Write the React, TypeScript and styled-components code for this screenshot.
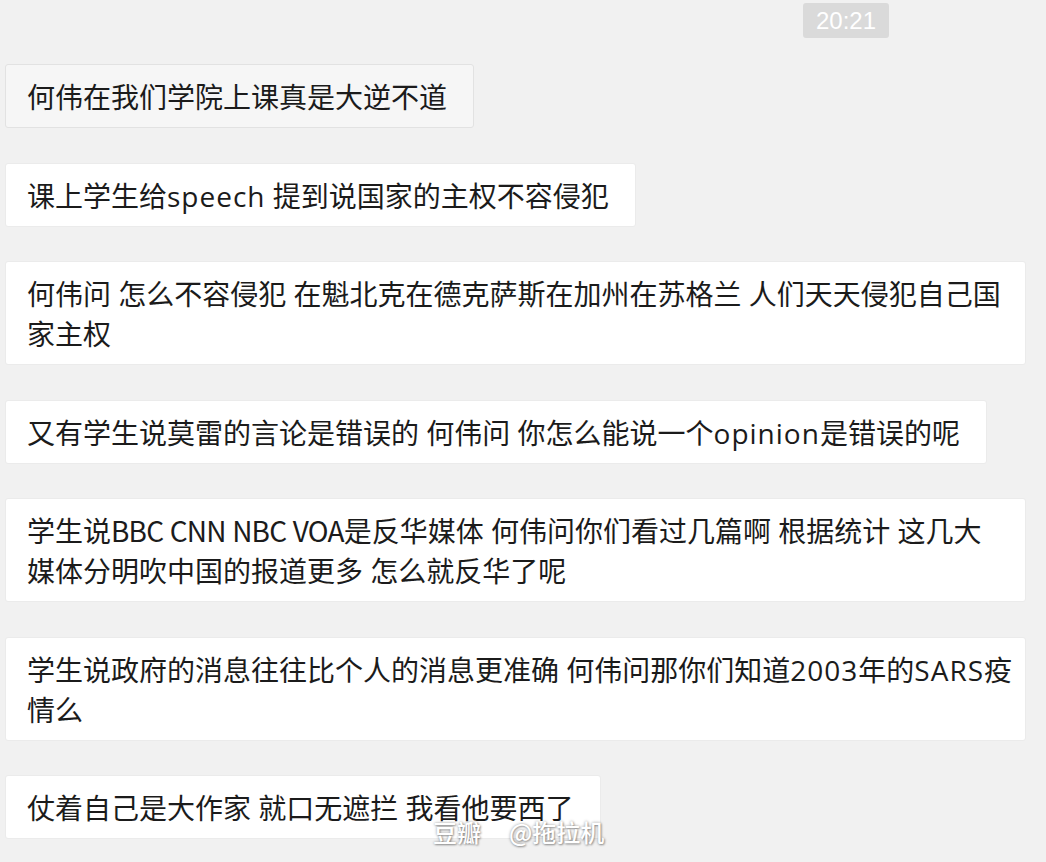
import React from "react";
import styled, { createGlobalStyle } from "styled-components";

const Global = createGlobalStyle`
  html, body { margin: 0; padding: 0; background: #f1f1f1; }
  body { font-family: "Noto Sans CJK SC", "Noto Sans", sans-serif; }
`;

const Page = styled.div`
  position: relative;
  width: 1046px;
  height: 862px;
  overflow: hidden;
  background: #f1f1f1;
  padding-top: 3px;
  box-sizing: border-box;
`;

const TimeRow = styled.div`
  display: flex;
  justify-content: flex-end;
  padding-right: 157px;
`;

const TimeStamp = styled.div`
  width: 86px;
  height: 35px;
  display: flex;
  align-items: center;
  justify-content: center;
  background: #dadada;
  border-radius: 3px;
  color: #ffffff;
  font-family: "Liberation Sans", "Open Sans", sans-serif;
  font-size: 24px;
`;

const List = styled.div`
  display: flex;
  flex-direction: column;
  align-items: flex-start;
  gap: 34.5px;
  padding-left: 5px;
  margin-top: 26px;
`;

const Bubble = styled.div<{ $muted?: boolean; $full?: boolean }>`
  box-sizing: border-box;
  max-width: 1021px;
  ${(p) => (p.$full ? "width: 1021px;" : "")}
  padding: 11px 26px 11px 21px;
  background: ${(p) => (p.$muted ? "#f6f6f6" : "#ffffff")};
  border: 1px solid ${(p) => (p.$muted ? "#e2e2e2" : "#ebebeb")};
  border-radius: 3px;
  color: #1b1b1b;
  font-size: 28px;
  line-height: 40px;
  word-spacing: 1px;
  white-space: nowrap;
`;

const Latin = styled.span`
  font-family: "Open Sans", "Noto Sans", sans-serif;
  font-size: 28px;
  line-height: 1;
  letter-spacing: 1px;
  word-spacing: 0;
`;

const Caps = styled.span`
  letter-spacing: -0.8px;
`;

const Watermark = styled.div`
  position: absolute;
  left: 433px;
  top: 816px;
  display: flex;
  gap: 28px;
  color: #ffffff;
  font-size: 24px;
  font-weight: 500;
  line-height: 32px;
  text-shadow: 0 0 3px rgba(0, 0, 0, 0.4), 1px 1px 2px rgba(0, 0, 0, 0.3);
  white-space: pre;
`;

type Seg = string | { l: string } | { c: string };
const messages: { lines: Seg[][]; muted?: boolean }[] = [
  { lines: [["何伟在我们学院上课真是大逆不道"]], muted: true },
  { lines: [["课上学生给", { l: "speech" }, " 提到说国家的主权不容侵犯"]] },
  {
    lines: [
      ["何伟问 怎么不容侵犯 在魁北克在德克萨斯在加州在苏格兰 人们天天侵犯自己国"],
      ["家主权"],
    ],
  },
  {
    lines: [
      ["又有学生说莫雷的言论是错误的 何伟问 你怎么能说一个", { l: "opinion" }, "是错误的呢"],
    ],
  },
  {
    lines: [
      ["学生说", { c: "BBC CNN NBC VOA" }, "是反华媒体 何伟问你们看过几篇啊 根据统计 这几大"],
      ["媒体分明吹中国的报道更多 怎么就反华了呢"],
    ],
  },
  {
    lines: [
      [
        "学生说政府的消息往往比个人的消息更准确 何伟问那你们知道",
        { l: "2003" },
        "年的",
        { l: "SARS" },
        "疫",
      ],
      ["情么"],
    ],
  },
  { lines: [["仗着自己是大作家 就口无遮拦 我看他要西了"]] },
];

function renderSeg(s: Seg, k: number) {
  if (typeof s === "string") return <React.Fragment key={k}>{s}</React.Fragment>;
  if ("l" in s) return <Latin key={k}>{s.l}</Latin>;
  return <Caps key={k}>{s.c}</Caps>;
}

export default function App() {
  return (
    <Page>
      <Global />
      <TimeRow>
        <TimeStamp>20:21</TimeStamp>
      </TimeRow>
      <List>
        {messages.map((m, i) => (
          <Bubble key={i} $muted={m.muted} $full={m.lines.length > 1}>
            {m.lines.map((line, j) => (
              <React.Fragment key={j}>
                {j > 0 && <br />}
                {line.map(renderSeg)}
              </React.Fragment>
            ))}
          </Bubble>
        ))}
      </List>
      <Watermark>
        <span>豆瓣</span>
        <span>@拖拉机</span>
      </Watermark>
    </Page>
  );
}
